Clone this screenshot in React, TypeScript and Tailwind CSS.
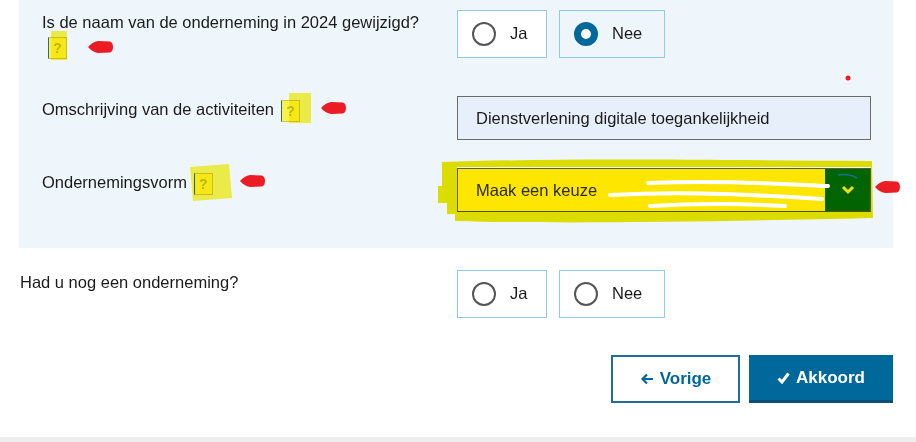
import React from 'react'

const font = { fontFamily: '"Liberation Sans", Arial, sans-serif' }

function RedArrow({ className }: { className: string }) {
  return (
    <svg className={`absolute ${className}`} width="26" height="14" viewBox="0 0 26 14">
      <path d="M0 7 C3 4 6 1.5 10 1 L22 1.5 C26 2.5 26 11.5 22 12.5 L10 13 C6 12.5 3 10 0 7 Z" fill="#ec1c24" />
    </svg>
  )
}

function Help() {
  return (
    <span className="inline-flex h-[22px] w-[19px] items-center justify-center border border-[#c9c94a] border-l-[#1f6d9d] bg-[#fbf34a] text-[14px] font-bold leading-none text-[#bcc13e]">
      ?
    </span>
  )
}

function Radio({ label, checked, tinted }: { label: string; checked?: boolean; tinted?: boolean }) {
  return (
    <div
      className={`flex h-[48px] items-center border border-[#8fcae6] pl-[14px] ${
        tinted ? 'bg-[#eef6fc]' : 'bg-white'
      } ${label === 'Ja' ? 'w-[90px]' : 'w-[106px]'}`}
    >
      {checked ? (
        <span className="h-[24px] w-[24px] rounded-full border-[7px] border-[#01689b] bg-white" />
      ) : (
        <span className="h-[24px] w-[24px] rounded-full border-2 border-[#555555] bg-white" />
      )}
      <span className="-mt-[2px] ml-[14px] text-[16.5px] text-[#1b1b1b]">{label}</span>
    </div>
  )
}

export default function App() {
  return (
    <div className="relative h-[442px] w-[916px] overflow-hidden bg-white text-[16.5px] text-[#1b1b1b]" style={font}>
      <div className="ml-[19px] w-[874px] bg-[#eef6fc] pb-[36px] pl-[23px] pt-[10px]">
        <div className="flex">
          <div className="w-[415px] leading-[24px]">
            <div>Is de naam van de onderneming in 2024 gewijzigd?</div>
            <div className="mt-[1px] pl-[6px]">
              <Help />
            </div>
          </div>
          <div className="flex gap-[12px]">
            <Radio label="Ja" />
            <Radio label="Nee" checked tinted />
          </div>
        </div>

        <div className="mt-[37px] flex">
          <div className="flex w-[415px] items-start pt-[1px] leading-[24px]">
            <span>Omschrijving van de activiteiten</span>
            <span className="ml-[7px] mt-[1px]">
              <Help />
            </span>
          </div>
          <div className="flex h-[44px] w-[414px] items-center border border-[#6b6b6b] bg-[#e7effa] pl-[18px]">
            Dienstverlening digitale toegankelijkheid
          </div>
        </div>

        <div className="mt-[28px] flex">
          <div className="flex w-[415px] items-start pt-[2px] leading-[24px]">
            <span>Ondernemingsvorm</span>
            <span className="ml-[7px] mt-[1px]">
              <Help />
            </span>
          </div>
          <div className="flex h-[44px] w-[414px] items-stretch border border-[#5a5a3c] bg-[#ffe600]">
            <div className="flex flex-1 items-center pl-[18px] text-[#2b2b10]">Maak een keuze</div>
            <div className="flex w-[45px] items-center justify-center bg-[#006400]">
              <svg width="14" height="10" viewBox="0 0 14 10">
                <path d="M2 2 L7 7 L12 2" fill="none" stroke="#f2e200" strokeWidth="3" />
              </svg>
            </div>
          </div>
        </div>
      </div>

      <div className="mt-[22px] flex pl-[20px]">
        <div className="w-[437px] leading-[24px]">Had u nog een onderneming?</div>
        <div className="flex gap-[12px]">
          <Radio label="Ja" />
          <Radio label="Nee" />
        </div>
      </div>

      <div className="mt-[37px] flex justify-end gap-[9px] pr-[23px]">
        <button className="flex h-[48px] w-[129px] items-center justify-center gap-[6px] border-2 border-[#1f6d9d] bg-white text-[17px] font-bold text-[#01689b]">
          <svg width="14" height="12" viewBox="0 0 14 12">
            <path d="M13 6 H2.5 M7 1.5 L2.5 6 L7 10.5" fill="none" stroke="#01689b" strokeWidth="2.2" />
          </svg>
          <span>Vorige</span>
        </button>
        <button className="flex h-[48px] w-[144px] items-center justify-center gap-[6px] border-b-[3px] border-[#0b4f75] bg-[#01689b] text-[17px] font-bold text-white">
          <svg width="13" height="12" viewBox="0 0 13 12">
            <path d="M1.5 6.5 L5 10 L11.5 1.5" fill="none" stroke="white" strokeWidth="3" />
          </svg>
          <span>Akkoord</span>
        </button>
      </div>

      <div className="absolute bottom-0 left-0 h-[5px] w-full bg-[#eeeeee]" />

      {/* highlighter marks */}
      <svg className="pointer-events-none absolute left-0 top-0 mix-blend-multiply" width="916" height="442">
        <path
          fillRule="evenodd"
          d="M442 162 C560 158 700 160 872 161 L873 218 C700 222 560 224 455 221 L455 214 L447 214 L447 203 L438 203 L438 186 L442 186 Z M457 167 L871 167 L871 211 L457 211 Z"
          fill="#ede400"
        />
        <path d="M190 167 L229 164 L232 198 L193 201 Z" fill="#fbf34a" />
        <path d="M289 93 L311 93 L311 123 L289 123 Z" fill="#fbf34a" />
        <path d="M51 31 L67 31 L67 60 L51 60 Z" fill="#fbf34a" />
      </svg>
      <svg className="pointer-events-none absolute left-0 top-0" width="916" height="442">
        <path
          d="M648 183 C720 180 780 184 828 186 M610 195 C690 191 760 195 822 199 M650 206 C700 203 750 204 785 206"
          stroke="white"
          strokeWidth="4"
          fill="none"
          strokeLinecap="round"
        />
        <path d="M838 175 C845 174 852 175 857 178" stroke="#1f6d9d" strokeWidth="1.5" fill="none" />
        <circle cx="848" cy="78" r="2.5" fill="#ec1c24" />
      </svg>
      <RedArrow className="left-[88px] top-[40px]" />
      <RedArrow className="left-[321px] top-[101px]" />
      <RedArrow className="left-[240px] top-[174px]" />
      <RedArrow className="left-[875px] top-[180px]" />
    </div>
  )
}
